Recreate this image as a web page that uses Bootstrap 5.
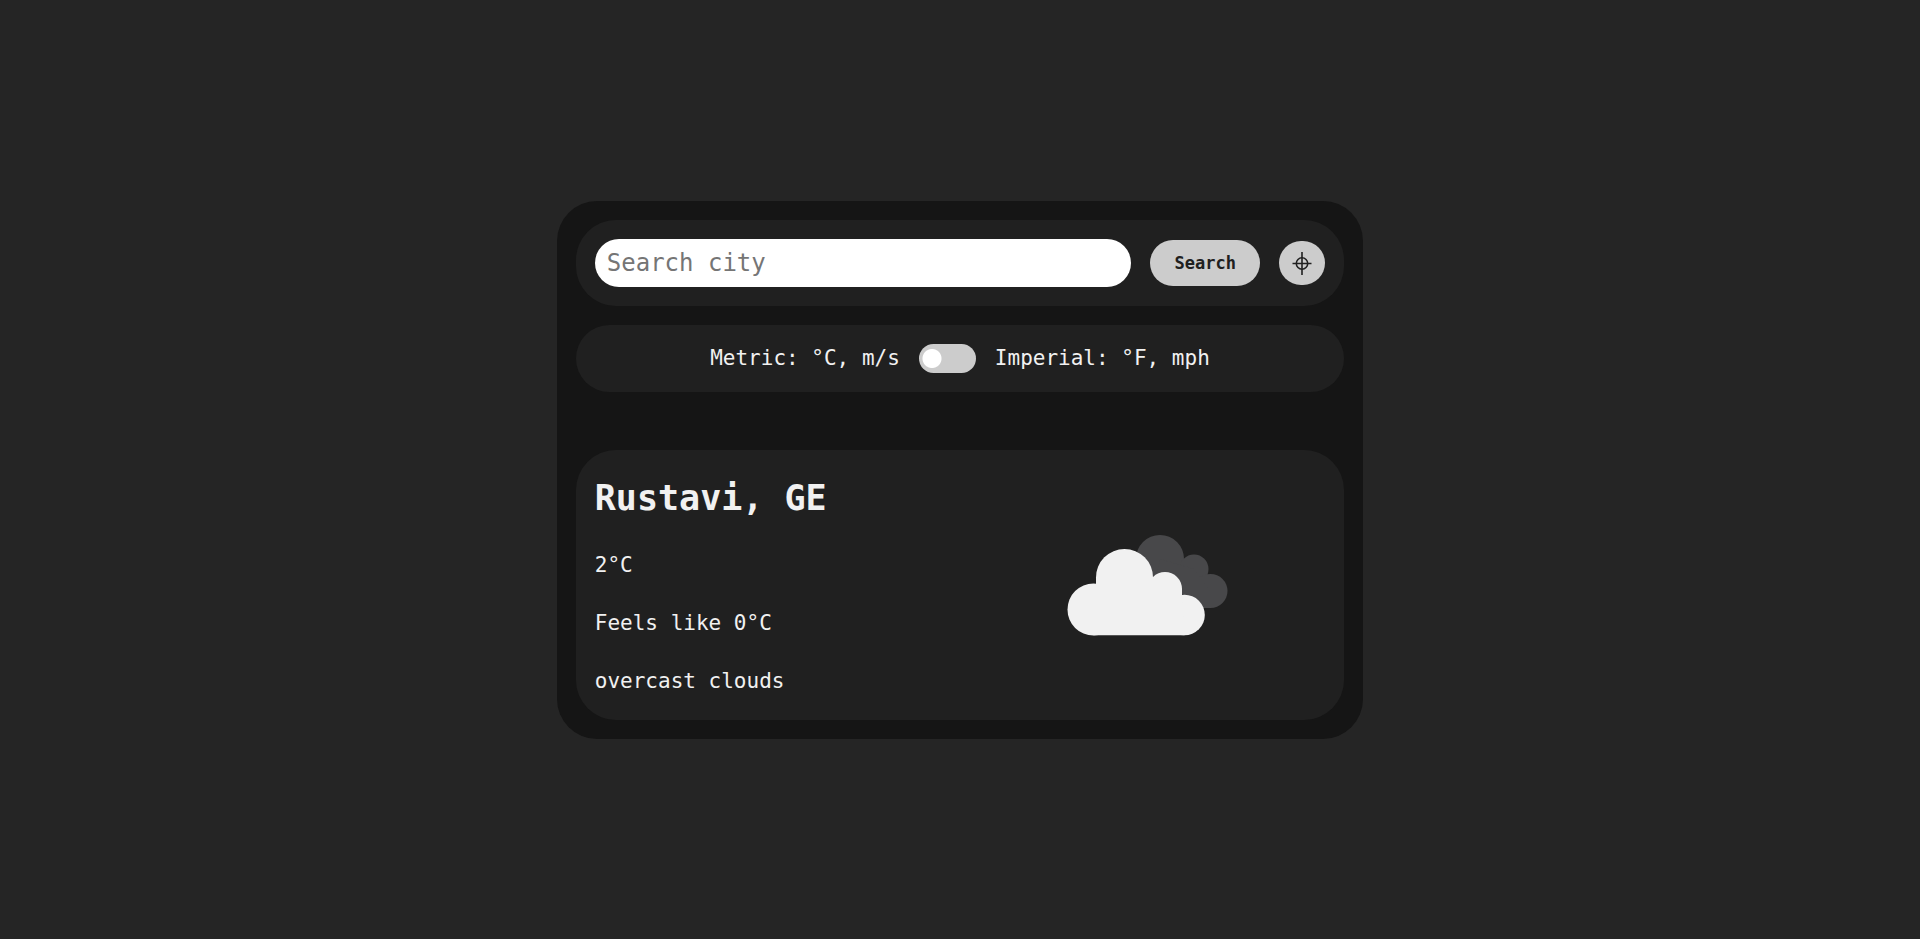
<!DOCTYPE html>
<html lang="en">
<head>
<meta charset="utf-8">
<meta name="viewport" content="width=device-width, initial-scale=1">
<title>Weather</title>
<link href="https://cdn.jsdelivr.net/npm/bootstrap@5.3.0/dist/css/bootstrap.min.css" rel="stylesheet">
<style>
  body { background: #252525; color: #f1f1f1; font-family: "DejaVu Sans Mono", monospace; font-size: 21px; line-height: 29px; }
  .weather-app { width: 42%; min-width: 720px; background: #151515; border-radius: 40px; padding: 19px; }
  .panel { background: #202020; border-radius: 40px; padding: 19px; }
  .panel-row { gap: 19px; }
  .city-input { height: 48px; border: 0; border-radius: 24px; padding: 0 12px; font-size: 24px; color: #202020; }
  .city-input::placeholder { color: #757575; }
  .app-btn { --bs-btn-bg: #ccc; --bs-btn-color: #202020; --bs-btn-hover-bg: #ddd; --bs-btn-hover-color: #202020; border: 0; border-radius: 24px; }
  .btn-search { width: 110px; height: 46px; padding: 2px 0 0; font-size: 17px; font-weight: 700; }
  .btn-locate { width: 46px; height: 44px; }
  .unit-panel { margin-top: 19px; }
  .unit-switch.form-switch { padding: 0; min-height: 0; }
  .unit-switch .form-check-input { width: 57px; height: 29px; margin: 0; border: 0; border-radius: 15px; background: #ccc radial-gradient(circle at 13px 50%, #fff 9px, transparent 10px) no-repeat; cursor: pointer; }
  .unit-switch .form-check-input:checked { background: #888 radial-gradient(circle at 44px 50%, #fff 9px, transparent 10px) no-repeat; }
  .weather-panel { margin-top: 58px; }
  .city-name { font-size: 35px; line-height: 48px; font-weight: 700; }
  .report { gap: 29px; padding: 5px 0; }
  .cloud-icon { width: 192px; height: 192px; }
</style>
</head>
<body>
<div class="min-vh-100 d-flex align-items-center justify-content-center">
  <main class="weather-app">
    <form class="panel panel-row d-flex align-items-center">
      <input class="form-control city-input flex-fill" type="text" placeholder="Search city" aria-label="Search city">
      <button class="btn app-btn btn-search flex-shrink-0" type="submit">Search</button>
      <button class="btn app-btn btn-locate flex-shrink-0 p-0 d-flex align-items-center justify-content-center" type="button" aria-label="Use my location">
        <svg width="24" height="24" viewBox="0 0 24 24" fill="none" stroke="#202020" stroke-width="1.6" aria-hidden="true">
          <circle cx="12" cy="12.500" r="5.700"/>
          <path d="M2.500 12.500H21.500M12 1V24"/>
        </svg>
      </button>
    </form>
    <div class="panel panel-row unit-panel d-flex align-items-center justify-content-center">
      <label for="units">Metric: °C, m/s</label>
      <div class="form-check form-switch unit-switch mb-0">
        <input class="form-check-input float-none d-block" type="checkbox" role="switch" id="units">
      </div>
      <label for="units">Imperial: °F, mph</label>
    </div>
    <section class="panel weather-panel">
      <div class="row g-0 align-items-center">
        <div class="col-6 d-flex flex-column report">
          <h1 class="city-name m-0">Rustavi, GE</h1>
          <p class="m-0">2°C</p>
          <p class="m-0">Feels like 0°C</p>
          <p class="m-0">overcast clouds</p>
        </div>
        <div class="col-6 d-flex justify-content-center">
          <svg class="cloud-icon" viewBox="1047 489 192 192" role="img" aria-label="Overcast clouds">
            <g fill="#48484a">
              <circle cx="1160" cy="559" r="24"/>
              <circle cx="1194" cy="569" r="14.5"/>
              <circle cx="1210.500" cy="591" r="17"/>
              <path d="M1160 559L1194 569L1210 591V608H1150Z"/>
            </g>
            <g fill="#f1f1f1">
              <circle cx="1093.500" cy="609.500" r="26"/>
              <circle cx="1124.500" cy="577.500" r="28.500"/>
              <circle cx="1165" cy="589" r="17"/>
              <circle cx="1184.500" cy="615" r="20.300"/>
              <path d="M1096 584V577H1153L1182 589V595L1184.500 635.300H1093.500V609Z"/>
            </g>
          </svg>
        </div>
      </div>
    </section>
  </main>
</div>
<script src="https://cdn.jsdelivr.net/npm/bootstrap@5.3.0/dist/js/bootstrap.bundle.min.js"></script>
</body>
</html>
